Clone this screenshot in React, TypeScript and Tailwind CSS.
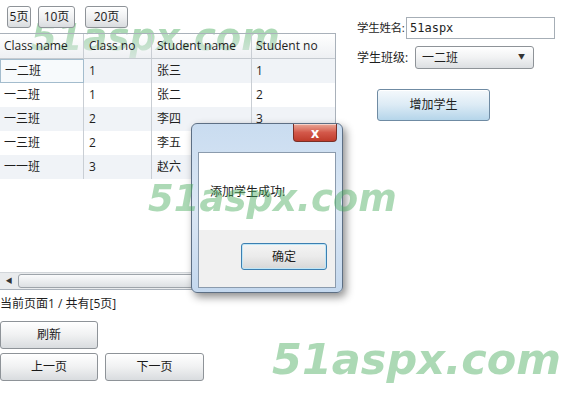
import React from "react";

const FONT = "font-['Open_Sans','Noto_Sans_CJK_SC',sans-serif]";

const ROWS = [
  { cls: "一二班", no: "1", name: "张三", sno: "1" },
  { cls: "一二班", no: "1", name: "张二", sno: "2" },
  { cls: "一三班", no: "2", name: "李四", sno: "3" },
  { cls: "一三班", no: "2", name: "李五", sno: "4" },
  { cls: "一一班", no: "3", name: "赵六", sno: "5" },
];

// silverlight-ish default button
function Btn({ children, className = "" }: { children: React.ReactNode; className?: string }) {
  return (
    <div
      className={`flex items-center justify-center rounded-[3px] border border-[#8e9398] bg-gradient-to-b from-[#ffffff] via-[#f0f1f2] to-[#d9dcdf] text-[12px] text-[#1a1a1a] shadow-[inset_0_1px_0_#ffffff] ${className}`}
    >
      {children}
    </div>
  );
}

function Watermark({ className }: { className: string }) {
  return (
    <div
      className={`pointer-events-none absolute font-['DejaVu_Sans',sans-serif] font-bold italic leading-none text-[rgba(70,170,90,0.45)] blur-[0.6px] ${className}`}
    >
      51aspx.com
    </div>
  );
}

export default function App() {
  return (
    <div className={`relative flex h-[404px] w-[585px] overflow-hidden bg-white ${FONT} text-[#1e1e1e]`}>
      {/* top watermark sits behind the grid */}
      <Watermark className="left-[31px] top-[19px] z-0 text-[37px]" />

      {/* left: grid + pager */}
      <div className="relative z-10 flex w-[336px] shrink-0 flex-col">
        <div className="mt-[6px] flex h-[22px] pl-[7px]">
          <Btn className="w-[24px]">5页</Btn>
          <Btn className="ml-[7px] w-[37px]">10页</Btn>
          <Btn className="ml-[10px] w-[43px]">20页</Btn>
        </div>

        <div className="mt-[5px] flex h-[257px] flex-col border-t border-r border-b border-[#a9b1ba]">
          {/* header */}
          <div className="flex h-[25px] shrink-0 border-b border-[#c5cad0] bg-gradient-to-b from-[#ffffff]/10 to-[#e6e9ed]/70 text-[12px]">
            <div className="flex w-[84px] items-center border-r border-[#c9ced4] pl-[4px]">Class name</div>
            <div className="flex w-[68px] items-center border-r border-[#c9ced4] pl-[5px]">Class no</div>
            <div className="flex w-[100px] items-center border-r border-[#c9ced4] pl-[5px]">Student name</div>
            <div className="flex flex-1 items-center pl-[4px]">Student no</div>
          </div>
          {/* rows */}
          {ROWS.map((r, i) => (
            <div key={i} className={`flex h-[24px] shrink-0 text-[12px] ${i % 2 === 0 ? "bg-[#f0f3f7]" : "bg-white"}`}>
              <div
                className={`flex w-[84px] items-center border-r pl-[4px] ${
                  i === 0 ? "border border-[#a3bccd] bg-[#f7fafc]" : "border-[#c9ced4]"
                }`}
              >
                {r.cls}
              </div>
              <div className="flex w-[68px] items-center border-r border-[#c9ced4] pl-[5px]">{r.no}</div>
              <div className="flex w-[100px] items-center border-r border-[#c9ced4] pl-[5px]">{r.name}</div>
              <div className="flex flex-1 items-center pl-[4px]">{r.sno}</div>
            </div>
          ))}
          <div className="flex-1 bg-white" />
          {/* horizontal scrollbar */}
          <div className="flex h-[17px] shrink-0 items-center border-t border-[#d2d6da] bg-[#e9ebed] px-[1px]">
            <div className="flex h-[15px] w-[16px] items-center justify-center text-[7px] text-[#333]">◀</div>
            <div className="ml-[1px] h-[14px] flex-1 rounded-[3px] border border-[#9ea4aa] bg-gradient-to-b from-[#fafbfc] to-[#dde0e3]" />
          </div>
        </div>

        <div className="mt-[6px] text-[12px] leading-[16px]">当前页面1 / 共有[5页]</div>

        <Btn className="mt-[9px] h-[28px] w-[98px]">刷新</Btn>
        <div className="mt-[4px] flex">
          <Btn className="h-[28px] w-[98px]">上一页</Btn>
          <Btn className="ml-[7px] h-[28px] w-[99px]">下一页</Btn>
        </div>
      </div>

      {/* right: form */}
      <div className="ml-[21px] flex flex-col pt-[17px] text-[12px]">
        <div className="flex h-[22px] items-center">
          <span className="w-[49px] whitespace-nowrap text-[11.5px] tracking-[-0.3px]">学生姓名:</span>
          <div className="flex h-[22px] w-[149px] items-center border border-[#a6aeb6] pl-[3px] font-['DejaVu_Sans_Mono',monospace] text-[12px]">
            51aspx
          </div>
        </div>
        <div className="mt-[7px] flex h-[23px] items-center">
          <span className="w-[58px] whitespace-nowrap">学生班级:</span>
          <div className="flex h-[23px] w-[119px] items-center justify-between rounded-[3px] border border-[#8e9398] bg-gradient-to-b from-[#ffffff] via-[#f1f2f3] to-[#dcdfe2] pl-[6px] pr-[8px]">
            <span>一二班</span>
            <span className="text-[7px] text-[#333]">▼</span>
          </div>
        </div>
        <div className="ml-[20px] mt-[20px] flex h-[32px] w-[113px] items-center justify-center rounded-[3px] border border-[#6f8ba3] bg-gradient-to-b from-[#f5f9fc] via-[#dcebf5] to-[#b5d5ea] shadow-[inset_0_1px_0_#ffffff]">
          增加学生
        </div>
      </div>

      {/* message box */}
      <div className="absolute left-[191px] top-[123px] z-20 flex h-[170px] w-[152px] flex-col rounded-[6px] border border-[#5d6f84] bg-gradient-to-b from-[#c9dcf0] via-[#dbe7f4] to-[#c4d8ee] px-[6px] pb-[4px] shadow-[3px_4px_9px_rgba(0,0,0,0.45)]">
        <div className="flex h-[28px] shrink-0 justify-end">
          <div className="-mr-[1px] flex h-[18px] w-[44px] items-center justify-center rounded-b-[4px] border border-t-0 border-[#7a2f26] bg-gradient-to-b from-[#e9a898] via-[#d3584a] to-[#bf3b2a] text-[14px] font-bold leading-none text-white shadow-[inset_0_1px_0_rgba(255,255,255,0.5)]">
            x
          </div>
        </div>
        <div className="flex flex-1 flex-col border border-[#8b9bad] bg-white">
          <div className="flex h-[77px] items-center pl-[11px] text-[12px]">添加学生成功!</div>
          <div className="flex flex-1 items-start justify-end bg-[#f0f0f0] pr-[8px] pt-[13px]">
            <div className="flex h-[27px] w-[86px] items-center justify-center rounded-[3px] border border-[#3c7fb1] bg-gradient-to-b from-[#f4f4f4] via-[#ebebeb] to-[#d7d7d7] text-[12px] shadow-[inset_0_0_0_1px_#bfe6f7]">
              确定
            </div>
          </div>
        </div>
      </div>

      <Watermark className="left-[148px] top-[180px] z-30 text-[37px]" />
      <Watermark className="left-[272px] top-[338px] z-30 text-[43px]" />
    </div>
  );
}
